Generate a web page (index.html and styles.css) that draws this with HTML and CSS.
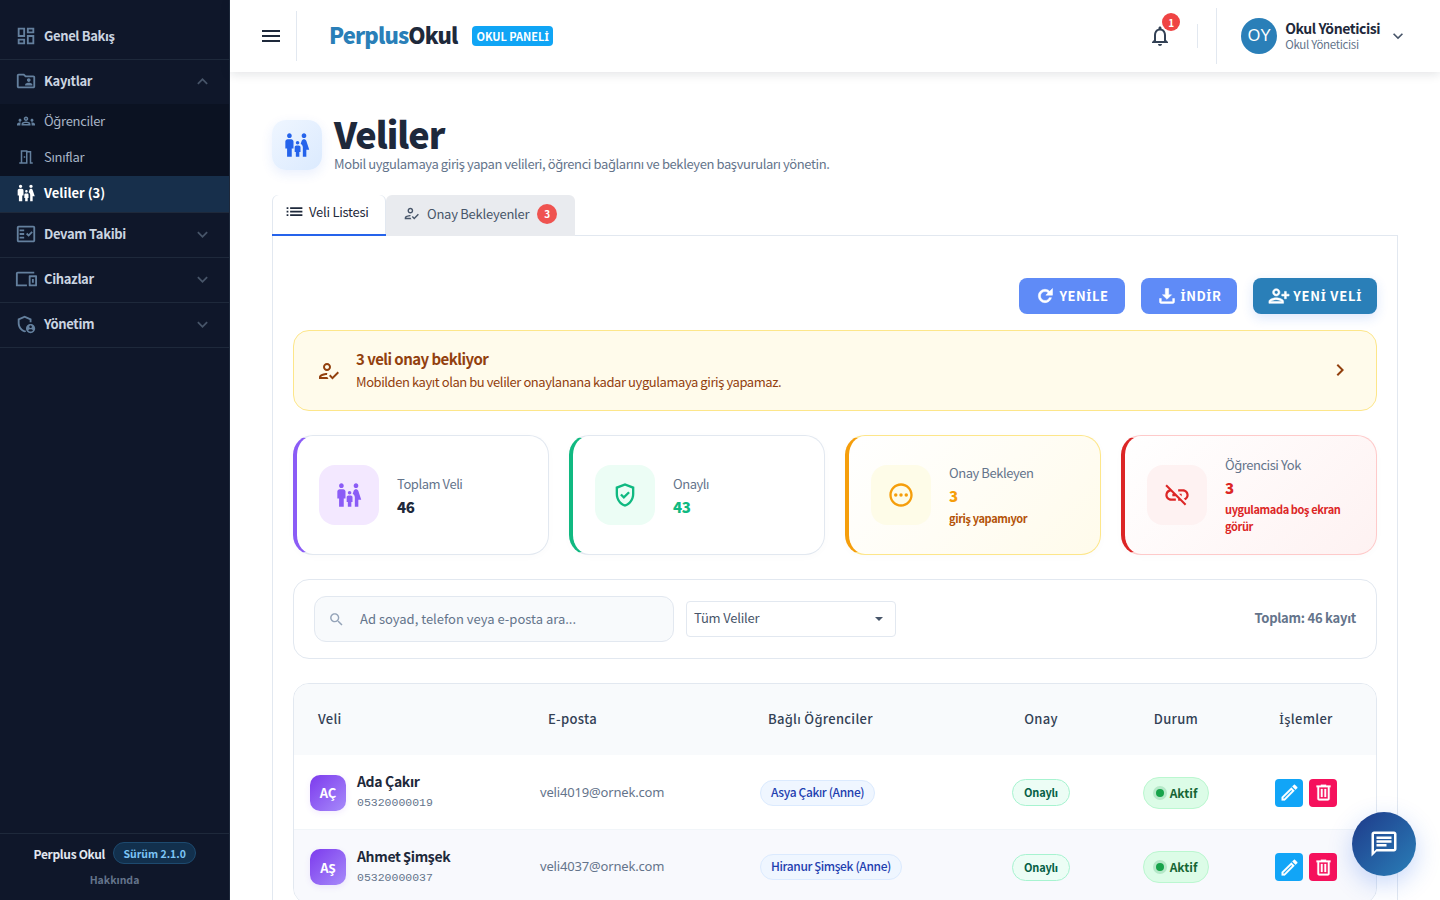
FILE: index.html
```html
<!DOCTYPE html>
<html>
<head>
    <meta charset="UTF-8">
    <meta name="viewport" content="width=device-width, initial-scale=1.0">
    <title>Veliler - Perplus Okul</title>
    <link rel="stylesheet" href="styles.css">
</head>
<body>
    <aside class="sidebar">
        <nav class="side-nav">
            <a class="nav-item first">
                <svg class="nav-icon" viewBox="0 0 24 24"><path d="M19 5v2h-4V5h4M9 5v6H5V5h4m10 8v6h-4v-6h4M9 17v2H5v-2h4M21 3h-8v6h8V3zM11 3H3v10h8V3zm10 8h-8v10h8V11zm-10 4H3v6h8v-6z"/></svg>
                <span>Genel Bakış</span>
            </a>
            <a class="nav-item open">
                <svg class="nav-icon" viewBox="0 0 24 24"><path d="M20 6h-8l-2-2H4c-1.1 0-2 .9-2 2v12c0 1.1.9 2 2 2h16c1.1 0 2-.9 2-2V8c0-1.1-.9-2-2-2zm0 12H4V6h5.17l2 2H20v10zm-5-5c1.1 0 2-.9 2-2s-.9-2-2-2-2 .9-2 2 .9 2 2 2zm-4 4h8v-1c0-1.33-2.67-2-4-2s-4 .67-4 2v1z"/></svg>
                <span>Kayıtlar</span>
                <svg class="nav-arrow" viewBox="0 0 24 24"><path d="M12 8l-6 6 1.41 1.41L12 10.83l4.59 4.58L18 14z"/></svg>
            </a>
            <div class="sub-nav">
                <a class="sub-item">
                    <svg class="nav-icon" viewBox="0 0 24 24"><path d="M4 13c1.1 0 2-.9 2-2s-.9-2-2-2-2 .9-2 2 .9 2 2 2zm1.13 1.1c-.37-.06-.74-.1-1.13-.1-.99 0-1.93.21-2.78.58C.48 14.9 0 15.62 0 16.43V18h4.5v-1.61c0-.83.23-1.61.63-2.29zM20 13c1.1 0 2-.9 2-2s-.9-2-2-2-2 .9-2 2 .9 2 2 2zm4 3.43c0-.81-.48-1.53-1.22-1.85-.85-.37-1.79-.58-2.78-.58-.39 0-.76.04-1.13.1.4.68.63 1.46.63 2.29V18H24v-1.57zm-7.76-2.78C15.07 13.13 13.63 12.75 12 12.75c-1.63 0-3.07.39-4.24.9C6.68 14.13 6 15.21 6 16.39V18h12v-1.61c0-1.18-.68-2.26-1.76-2.74zM8.07 16c.09-.23.13-.39.91-.69.97-.38 1.99-.56 3.02-.56s2.05.18 3.02.56c.77.3.81.46.91.69H8.07zM12 8c.55 0 1 .45 1 1s-.45 1-1 1-1-.45-1-1 .45-1 1-1m0-2c-1.66 0-3 1.34-3 3s1.34 3 3 3 3-1.34 3-3-1.34-3-3-3z"/></svg>
                    <span>Öğrenciler</span>
                </a>
                <a class="sub-item">
                    <svg class="nav-icon" viewBox="0 0 24 24"><path d="M14 6v15H3v-2h2V3h9v1h5v15h2v2h-4V6h-3zm-2-1H7v14h5V5zm-3 6h2v2H9v-2z"/></svg>
                    <span>Sınıflar</span>
                </a>
                <a class="sub-item active">
                    <svg class="nav-icon" viewBox="0 0 24 24"><path d="M16 4c0-1.11.89-2 2-2s2 .89 2 2-.89 2-2 2-2-.89-2-2zm4 18v-6h2.5l-2.54-7.63C19.68 7.55 18.92 7 18.06 7h-.12c-.86 0-1.63.55-1.9 1.37l-.86 2.58C16.26 11.55 17 12.68 17 14v8h3zm-7.5-10.5c.83 0 1.5-.67 1.5-1.5s-.67-1.5-1.5-1.5S11 9.17 11 10s.67 1.5 1.5 1.5zM5.5 6c1.11 0 2-.89 2-2s-.89-2-2-2-2 .89-2 2 .89 2 2 2zm2 16v-7H9V9c0-1.1-.9-2-2-2H4c-1.1 0-2 .9-2 2v6h1.5v7h4zm6.5 0v-4h1v-4c0-.82-.68-1.5-1.5-1.5h-2c-.82 0-1.5.68-1.5 1.5v4h1v4h3z"/></svg>
                    <span>Veliler (3)</span>
                </a>
            </div>
            <a class="nav-item">
                <svg class="nav-icon" viewBox="0 0 24 24"><path fill-rule="evenodd" d="M20 3H4c-1.1 0-2 .9-2 2v14c0 1.1.9 2 2 2h16c1.1 0 2-.9 2-2V5c0-1.1-.9-2-2-2zm0 16H4V5h16v14zM19.41 10.42L18 9l-3.17 3.17-1.41-1.42L12 12.17 14.83 15zM5 7h5v2H5zM5 11h5v2H5zM5 15h5v2H5z"/></svg>
                <span>Devam Takibi</span>
                <svg class="nav-arrow" viewBox="0 0 24 24"><path d="M16.59 8.59L12 13.17 7.41 8.59 6 10l6 6 6-6z"/></svg>
            </a>
            <a class="nav-item">
                <svg class="nav-icon" viewBox="0 0 24 24"><path d="M3 6h18V4H3c-1.1 0-2 .9-2 2v11H1v3h12v-2H3V6zm20 2h-7c-.55 0-1 .45-1 1v10c0 .55.45 1 1 1h7c.55 0 1-.45 1-1V9c0-.55-.45-1-1-1zm-1 10h-5v-8h5v8zm-3.5-6h2v4h-2z"/></svg>
                <span>Cihazlar</span>
                <svg class="nav-arrow" viewBox="0 0 24 24"><path d="M16.59 8.59L12 13.17 7.41 8.59 6 10l6 6 6-6z"/></svg>
            </a>
            <a class="nav-item">
                <svg class="nav-icon" viewBox="0 0 24 24"><path d="M10.5 3L3 6.27v4.91c0 4.54 3.2 8.79 7.5 9.82.55-.13 1.08-.32 1.6-.55l-.9-1.6c-.23.1-.46.18-.7.25C7.2 17.9 5 14.5 5 11.18V7.6l5.5-2.4L16 7.6v2.4h2V6.27L10.5 3zM17 12c-2.76 0-5 2.24-5 5s2.24 5 5 5 5-2.24 5-5-2.24-5-5-5zm0 1.6c.8 0 1.4.63 1.4 1.4s-.63 1.4-1.4 1.4-1.4-.63-1.4-1.4.6-1.4 1.4-1.4zm0 6.7c-1.1 0-2.1-.55-2.7-1.4.1-.85 1.8-1.3 2.7-1.3s2.6.45 2.7 1.3c-.6.85-1.6 1.4-2.7 1.4z"/></svg>
                <span>Yönetim</span>
                <svg class="nav-arrow" viewBox="0 0 24 24"><path d="M16.59 8.59L12 13.17 7.41 8.59 6 10l6 6 6-6z"/></svg>
            </a>
        </nav>
        <div class="side-footer">
            <div class="side-brand">
                <strong>Perplus Okul</strong>
                <span class="version">Sürüm 2.1.0</span>
            </div>
            <a class="about">Hakkında</a>
        </div>
    </aside>

    <div class="content">
        <header class="topbar">
            <button class="menu-btn">
                <svg viewBox="0 0 24 24"><path d="M3 18h18v-2H3v2zm0-5h18v-2H3v2zm0-7v2h18V6H3z"/></svg>
            </button>
            <div class="logo"><span class="logo-a">Perplus</span><span class="logo-b">Okul</span></div>
            <span class="panel-tag"><span>OKUL PANEL<span class="tr-i">İ</span></span></span>
            <div class="top-right">
                <div class="bell">
                    <svg viewBox="0 0 24 24"><path d="M12 22c1.1 0 2-.9 2-2h-4c0 1.1.9 2 2 2zm6-6v-5c0-3.07-1.63-5.64-4.5-6.32V4c0-.83-.67-1.5-1.5-1.5s-1.5.67-1.5 1.5v.68C7.64 5.36 6 7.92 6 11v5l-2 2v1h16v-1l-2-2zm-2 1H8v-6c0-2.48 1.51-4.5 4-4.5s4 2.02 4 4.5v6z"/></svg>
                    <span class="bell-count">1</span>
                </div>
                <div class="short-line"></div>
                <div class="user">
                    <div class="user-avatar">OY</div>
                    <div class="user-text">
                        <strong>Okul Yöneticisi</strong>
                        <span>Okul Yöneticisi</span>
                    </div>
                    <svg class="user-arrow" viewBox="0 0 24 24"><path d="M16.59 8.59L12 13.17 7.41 8.59 6 10l6 6 6-6z"/></svg>
                </div>
            </div>
        </header>

        <main class="main">
            <div class="page-head">
                <div class="page-icon">
                    <svg viewBox="0 0 24 24"><path d="M16 4c0-1.11.89-2 2-2s2 .89 2 2-.89 2-2 2-2-.89-2-2zm4 18v-6h2.5l-2.54-7.63C19.68 7.55 18.92 7 18.06 7h-.12c-.86 0-1.63.55-1.9 1.37l-.86 2.58C16.26 11.55 17 12.68 17 14v8h3zm-7.5-10.5c.83 0 1.5-.67 1.5-1.5s-.67-1.5-1.5-1.5S11 9.17 11 10s.67 1.5 1.5 1.5zM5.5 6c1.11 0 2-.89 2-2s-.89-2-2-2-2 .89-2 2 .89 2 2 2zm2 16v-7H9V9c0-1.1-.9-2-2-2H4c-1.1 0-2 .9-2 2v6h1.5v7h4zm6.5 0v-4h1v-4c0-.82-.68-1.5-1.5-1.5h-2c-.82 0-1.5.68-1.5 1.5v4h1v4h3z"/></svg>
                </div>
                <div>
                    <h1>Veliler</h1>
                    <p>Mobil uygulamaya giriş yapan velileri, öğrenci bağlarını ve bekleyen başvuruları yönetin.</p>
                </div>
            </div>

            <div class="tabs">
                <button class="tab active">
                    <svg viewBox="0 0 24 24"><path d="M3 13h2v-2H3v2zm0 4h2v-2H3v2zm0-8h2V7H3v2zm4 4h14v-2H7v2zm0 4h14v-2H7v2zM7 7v2h14V7H7z"/></svg>
                    Veli Listesi
                </button>
                <button class="tab">
                    <svg viewBox="0 0 24 24"><path d="M9 12c2.21 0 4-1.79 4-4s-1.79-4-4-4-4 1.79-4 4 1.79 4 4 4zm0-6c1.1 0 2 .9 2 2s-.9 2-2 2-2-.9-2-2 .9-2 2-2zM3 18c.22-.72 3.31-2 6-2 0-.7.13-1.37.35-1.99C6.62 13.91 1 15.27 1 18v2h9.54c-.52-.58-.93-1.25-1.19-2H3zM19.6 12.5l-5.13 5.17-2.07-2.08L11 17l3.47 3.5L21 13.91z"/></svg>
                    Onay Bekleyenler
                    <span class="tab-count">3</span>
                </button>
            </div>

            <section class="panel">
                <div class="actions">
                    <button class="btn btn-light">
                        <svg viewBox="0 0 24 24"><path d="M17.65 6.35C16.2 4.9 14.21 4 12 4c-4.42 0-7.99 3.58-7.99 8s3.57 8 7.99 8c3.73 0 6.84-2.55 7.73-6h-2.6c-.82 2.02-2.8 3.4-5.13 3.4-3.04 0-5.4-2.36-5.4-5.4s2.36-5.4 5.4-5.4c1.5 0 2.8.6 3.8 1.6L13 11h8V3l-3.35 3.35z"/></svg>
                        <span>YEN<span class="tr-i">İ</span>LE</span>
                    </button>
                    <button class="btn btn-light">
                        <svg viewBox="0 0 24 24"><path d="M12 16l5.5-5.5H14V3h-4v7.5H6.5L12 16zM3 15h2.2v3.8h13.600V15H21v4c0 1.100-.9 2-2 2H5c-1.100 0-2-.9-2-2v-4z"/></svg>
                        <span><span class="tr-i">İ</span>ND<span class="tr-i">İ</span>R</span>
                    </button>
                    <button class="btn btn-dark">
                        <svg class="flip" viewBox="0 0 24 24"><path d="M15 12c2.21 0 4-1.790 4-4s-1.790-4-4-4-4 1.790-4 4 1.790 4 4 4zm0-6c1.100 0 2 .9 2 2s-.9 2-2 2-2-.9-2-2 .9-2 2-2zm0 8c-2.670 0-8 1.340-8 4v2h16v-2c0-2.660-5.330-4-8-4zm-6 4c.22-.72 3.310-2 6-2 2.700 0 5.800 1.290 6 2H9zm-3-3v-3h3v-2H6V7H4v3H1v2h3v3z"/></svg>
                        <span>YEN<span class="tr-i">İ</span> VEL<span class="tr-i">İ</span></span>
                    </button>
                </div>

                <div class="notice">
                    <svg class="notice-icon" viewBox="0 0 24 24"><path d="M9 12c2.21 0 4-1.79 4-4s-1.79-4-4-4-4 1.79-4 4 1.79 4 4 4zm0-6c1.1 0 2 .9 2 2s-.9 2-2 2-2-.9-2-2 .9-2 2-2zM3 18c.22-.72 3.31-2 6-2 0-.7.13-1.37.35-1.99C6.62 13.91 1 15.27 1 18v2h9.54c-.52-.58-.93-1.25-1.19-2H3zM19.6 12.5l-5.13 5.17-2.07-2.08L11 17l3.47 3.5L21 13.91z"/></svg>
                    <div class="notice-text">
                        <strong>3 veli onay bekliyor</strong>
                        <span>Mobilden kayıt olan bu veliler onaylanana kadar uygulamaya giriş yapamaz.</span>
                    </div>
                    <svg class="notice-arrow" viewBox="0 0 24 24"><path d="M10 6L8.590 7.410 13.170 12l-4.580 4.590L10 18l6-6z"/></svg>
                </div>

                <div class="stats">
                    <div class="stat stat-purple">
                        <div class="stat-icon">
                            <svg viewBox="0 0 24 24"><path d="M16 4c0-1.11.89-2 2-2s2 .89 2 2-.89 2-2 2-2-.89-2-2zm4 18v-6h2.5l-2.54-7.63C19.68 7.55 18.92 7 18.06 7h-.12c-.86 0-1.63.55-1.9 1.37l-.86 2.58C16.26 11.55 17 12.68 17 14v8h3zm-7.5-10.5c.83 0 1.5-.67 1.5-1.5s-.67-1.5-1.5-1.5S11 9.17 11 10s.67 1.5 1.5 1.5zM5.5 6c1.11 0 2-.89 2-2s-.89-2-2-2-2 .89-2 2 .89 2 2 2zm2 16v-7H9V9c0-1.1-.9-2-2-2H4c-1.1 0-2 .9-2 2v6h1.5v7h4zm6.5 0v-4h1v-4c0-.82-.68-1.5-1.5-1.5h-2c-.82 0-1.5.68-1.5 1.5v4h1v4h3z"/></svg>
                        </div>
                        <div class="stat-text">
                            <span class="stat-label">Toplam Veli</span>
                            <strong class="stat-value">46</strong>
                        </div>
                    </div>
                    <div class="stat stat-green">
                        <div class="stat-icon">
                            <svg viewBox="0 0 24 24"><path d="M12 2L4 5v6.090c0 5.050 3.410 9.760 8 10.910 4.590-1.150 8-5.860 8-10.910V5l-8-3zm6 9.090c0 4-2.550 7.700-6 8.830-3.450-1.130-6-4.820-6-8.830v-4.700l6-2.250 6 2.250v4.700zM9.200 10.900l-1.400 1.400 3.200 3.200 5.200-5.200-1.400-1.400-3.800 3.800-1.800-1.800z"/></svg>
                        </div>
                        <div class="stat-text">
                            <span class="stat-label">Onaylı</span>
                            <strong class="stat-value">43</strong>
                        </div>
                    </div>
                    <div class="stat stat-amber">
                        <div class="stat-icon">
                            <svg viewBox="0 0 24 24"><path d="M12 2C6.480 2 2 6.480 2 12s4.480 10 10 10 10-4.480 10-10S17.520 2 12 2zm0 18c-4.420 0-8-3.580-8-8s3.580-8 8-8 8 3.580 8 8-3.580 8-8 8z"/><circle cx="7.500" cy="12" r="1.500"/><circle cx="12" cy="12" r="1.500"/><circle cx="16.500" cy="12" r="1.500"/></svg>
                        </div>
                        <div class="stat-text">
                            <span class="stat-label">Onay Bekleyen</span>
                            <strong class="stat-value">3</strong>
                            <small class="stat-note">giriş yapamıyor</small>
                        </div>
                    </div>
                    <div class="stat stat-red">
                        <div class="stat-icon">
                            <svg viewBox="0 0 24 24"><path d="M17 7h-4v1.900h4c1.710 0 3.100 1.390 3.100 3.100 0 1.430-.98 2.630-2.310 2.980l1.460 1.460C20.880 15.610 22 13.950 22 12c0-2.760-2.240-5-5-5zm-1 4h-2.190l2 2H16zM2 4.270l3.110 3.110C3.290 8.120 2 9.910 2 12c0 2.760 2.240 5 5 5h4v-1.900H7c-1.710 0-3.100-1.390-3.100-3.100 0-1.590 1.210-2.900 2.760-3.070L8.730 11H8v2h2.730L13 15.270V17h1.730l4.010 4L20 19.740 3.270 3 2 4.270z"/></svg>
                        </div>
                        <div class="stat-text">
                            <span class="stat-label">Öğrencisi Yok</span>
                            <strong class="stat-value">3</strong>
                            <small class="stat-note">uygulamada boş ekran görür</small>
                        </div>
                    </div>
                </div>

                <div class="filters">
                    <div class="search">
                        <svg viewBox="0 0 24 24"><path d="M15.500 14h-.79l-.28-.27C15.410 12.590 16 11.110 16 9.500 16 5.910 13.090 3 9.500 3S3 5.910 3 9.500 5.910 16 9.500 16c1.610 0 3.090-.59 4.230-1.570l.27.28v.79l5 4.990L20.490 19l-4.990-5zm-6 0C7.010 14 5 11.990 5 9.500S7.010 5 9.500 5 14 7.010 14 9.500 11.990 14 9.500 14z"/></svg>
                        <span>Ad soyad, telefon veya e-posta ara...</span>
                    </div>
                    <div class="select">
                        <span>Tüm Veliler</span>
                        <i class="caret"></i>
                    </div>
                    <strong class="total">Toplam: 46 kayıt</strong>
                </div>

                <div class="table-card">
                    <table class="table">
                        <thead>
                            <tr>
                                <th class="col-name">Veli</th>
                                <th class="col-mail">E-posta</th>
                                <th class="col-kids">Bağlı Öğrenciler</th>
                                <th class="col-ok">Onay</th>
                                <th class="col-state">Durum</th>
                                <th class="col-act"><span class="tr-i">İ</span>şlemler</th>
                            </tr>
                        </thead>
                        <tbody>
                            <tr>
                                <td>
                                    <div class="person">
                                        <div class="initials">AÇ</div>
                                        <div class="person-text">
                                            <strong>Ada Çakır</strong>
                                            <span>05320000019</span>
                                        </div>
                                    </div>
                                </td>
                                <td class="mail">veli4019@ornek.com</td>
                                <td><span class="kid">Asya Çakır (Anne)</span></td>
                                <td class="mid"><span class="ok-chip">Onaylı</span></td>
                                <td class="mid"><span class="state-chip"><i class="dot"></i>Aktif</span></td>
                                <td class="mid">
                                    <div class="row-btns">
                                        <button class="icon-btn edit"><svg viewBox="0 0 24 24"><path d="M14.060 9L15 9.940 5.920 19H5v-.92L14.060 9M17.660 3c-.25 0-.51.1-.7.29l-1.830 1.830 3.750 3.750 1.830-1.830c.39-.39.39-1.040 0-1.410l-2.340-2.340c-.2-.2-.45-.29-.71-.29M14.060 6.190L3 17.250V21h3.750L17.810 9.940l-3.750-3.750z"/></svg></button>
                                        <button class="icon-btn del"><svg viewBox="0 0 24 24"><path d="M9 3v1H4v2h1v13a2 2 0 0 0 2 2h10a2 2 0 0 0 2-2V6h1V4h-5V3H9M7 6h10v13H7V6m2 2v9h2V8H9m4 0v9h2V8h-2z"/></svg></button>
                                    </div>
                                </td>
                            </tr>
                            <tr class="alt">
                                <td>
                                    <div class="person">
                                        <div class="initials">AŞ</div>
                                        <div class="person-text">
                                            <strong>Ahmet Şimşek</strong>
                                            <span>05320000037</span>
                                        </div>
                                    </div>
                                </td>
                                <td class="mail">veli4037@ornek.com</td>
                                <td><span class="kid">Hiranur Şimşek (Anne)</span></td>
                                <td class="mid"><span class="ok-chip">Onaylı</span></td>
                                <td class="mid"><span class="state-chip"><i class="dot"></i>Aktif</span></td>
                                <td class="mid">
                                    <div class="row-btns">
                                        <button class="icon-btn edit"><svg viewBox="0 0 24 24"><path d="M14.060 9L15 9.940 5.920 19H5v-.92L14.060 9M17.660 3c-.25 0-.51.1-.7.29l-1.830 1.830 3.750 3.750 1.830-1.830c.39-.39.39-1.040 0-1.410l-2.340-2.340c-.2-.2-.45-.29-.71-.29M14.060 6.190L3 17.250V21h3.750L17.810 9.940l-3.750-3.750z"/></svg></button>
                                        <button class="icon-btn del"><svg viewBox="0 0 24 24"><path d="M9 3v1H4v2h1v13a2 2 0 0 0 2 2h10a2 2 0 0 0 2-2V6h1V4h-5V3H9M7 6h10v13H7V6m2 2v9h2V8H9m4 0v9h2V8h-2z"/></svg></button>
                                    </div>
                                </td>
                            </tr>
                        </tbody>
                    </table>
                </div>
            </section>
        </main>
    </div>

    <button class="chat-fab">
        <svg viewBox="0 0 24 24"><path d="M20 2H4c-1.100 0-2 .9-2 2v18l4-4h14c1.100 0 2-.9 2-2V4c0-1.100-.9-2-2-2zm0 14H6l-2 2V4h16v12zM6 12h8v2H6zM6 9h12v2H6zM6 6h12v2H6z"/></svg>
    </button>
</body>
</html>
```

FILE: styles.css
```css
* {
    box-sizing: border-box;
    margin: 0;
    padding: 0;
}

html,
body {
    height: 100%;
    overflow: hidden;
}

body {
    display: flex;
    font-family: "Noto Sans CJK SC", "Noto Sans", sans-serif;
    font-size: 13px;
    color: #1e293b;
    background-color: #fff;
}

svg {
    fill: currentColor;
    display: block;
    flex-shrink: 0;
}

button {
    font-family: inherit;
    border: none;
    background: none;
}

/* the CJK font has no usable dotted capital I */
.tr-i {
    font-family: "Noto Sans", sans-serif;
}

/* sidebar */

.sidebar {
    width: 230px;
    height: 100vh;
    flex-shrink: 0;
    display: flex;
    flex-direction: column;
    background-color: #0f172a;
    border-right: 1px solid #1e293b;
}

.side-nav {
    flex: 1;
    padding-top: 14px;
}

.nav-item {
    height: 45px;
    display: flex;
    align-items: center;
    gap: 7px;
    padding: 0 16px 2px 15px;
    font-size: 13px;
    font-weight: 700;
    letter-spacing: -0.35px;
    color: #cbd5e1;
    border-bottom: 1px solid #1e293b;
}

.nav-item.first {
    height: 46px;
}

.nav-item.open {
    border-bottom: none;
    height: 44px;
}

.nav-icon {
    width: 22px;
    height: 22px;
    color: #64809e;
}

.nav-item span,
.sub-item span {
    flex: 1;
    padding-bottom: 2px;
}

.nav-item.first span {
    padding-bottom: 0;
}

.nav-arrow {
    width: 21px;
    height: 21px;
    color: #475569;
}

.sub-nav {
    background-color: #0b1222;
    border-bottom: 1px solid #1e293b;
}

.sub-item {
    height: 36px;
    display: flex;
    align-items: center;
    gap: 9px;
    padding: 0 17px 2px;
    font-size: 13px;
    letter-spacing: -0.3px;
    color: #a8b5c7;
}

.sub-item .nav-icon {
    width: 18px;
    height: 18px;
}

.sub-item.active {
    background-color: #172f4b;
    color: #fff;
    font-weight: 700;
    letter-spacing: 0;
}

.sub-item.active .nav-icon {
    width: 20px;
    height: 20px;
    margin: 0 -1px;
    color: #fff;
}

.side-footer {
    height: 67px;
    border-top: 1px solid #1e293b;
    display: flex;
    flex-direction: column;
    align-items: center;
    padding-top: 8px;
    gap: 8px;
}

.side-brand {
    display: flex;
    align-items: center;
    gap: 8px;
    margin-left: 1px;
}

.side-brand strong {
    font-size: 12px;
    font-weight: 700;
    letter-spacing: -0.33px;
    color: #e2e8f0;
}

.version {
    height: 22px;
    padding: 0 9.5px;
    display: flex;
    align-items: center;
    border-radius: 11px;
    font-size: 10.5px;
    font-weight: 700;
    color: #7cc4f5;
    background-color: #12304d;
    border: 1px solid #1d4a6f;
}

.about {
    font-size: 10.5px;
    font-weight: 700;
    color: #64748b;
}

/* top bar */

.content {
    flex: 1;
    min-width: 0;
    height: 100vh;
    display: flex;
    flex-direction: column;
    background-color: #fff;
}

.topbar {
    height: 72px;
    flex-shrink: 0;
    display: flex;
    align-items: center;
    background-color: #fff;
    box-shadow: 0 2px 10px rgba(15, 23, 42, 0.12);
    position: relative;
    z-index: 2;
}

.menu-btn {
    width: 67px;
    height: 50px;
    padding-left: 29px;
    border-right: 1px solid #e2e8f0;
    color: #1e293b;
    display: flex;
    align-items: center;
}

.menu-btn svg {
    width: 24px;
    height: 24px;
}

.logo {
    margin-left: 32px;
    padding-bottom: 4px;
    font-size: 22px;
    font-weight: 900;
    letter-spacing: -0.85px;
}

.logo-a {
    color: #2a7fb8;
}

.logo-b {
    color: #1e293b;
}

.panel-tag {
    margin-left: 15px;
    height: 20px;
    padding: 0 4px 1px;
    display: flex;
    align-items: center;
    border-radius: 4px;
    font-size: 11px;
    font-weight: 700;
    color: #fff;
    background-color: #10a5f5;
}

.top-right {
    margin-left: auto;
    display: flex;
    align-items: center;
}

.bell {
    position: relative;
    width: 24px;
    height: 24px;
    color: #334155;
}

.bell svg {
    width: 24px;
    height: 24px;
}

.bell-count {
    position: absolute;
    top: -11px;
    left: 14px;
    width: 18px;
    height: 18px;
    border-radius: 50%;
    display: flex;
    align-items: center;
    justify-content: center;
    font-size: 10px;
    font-weight: 700;
    color: #fff;
    background-color: #ef4444;
}

.short-line {
    width: 1px;
    height: 24px;
    margin-left: 25px;
    background-color: #e2e8f0;
}

.user {
    height: 56px;
    margin-left: 18px;
    padding: 0 32px 0 24px;
    display: flex;
    align-items: center;
    gap: 8px;
    border-left: 1px solid #e2e8f0;
}

.user-avatar {
    width: 36px;
    height: 36px;
    border-radius: 50%;
    display: flex;
    align-items: center;
    justify-content: center;
    font-family: "Liberation Sans", sans-serif;
    font-size: 16px;
    color: #fff;
    background-color: #2a7fb8;
}

.user-text {
    display: flex;
    flex-direction: column;
    line-height: 16px;
}

.user-text strong {
    font-size: 14px;
    font-weight: 700;
    letter-spacing: -0.45px;
    color: #1e293b;
}

.user-text span {
    font-size: 11.5px;
    letter-spacing: -0.33px;
    color: #64748b;
}

.user-arrow {
    width: 20px;
    height: 20px;
    color: #475569;
}

/* page */

.main {
    flex: 1;
    overflow: hidden;
    padding: 48px 42px 0;
    background-color: #fff;
}

.page-head {
    display: flex;
    align-items: center;
    gap: 12px;
    height: 50px;
}

.page-icon {
    width: 50px;
    height: 50px;
    border-radius: 14px;
    display: flex;
    align-items: center;
    justify-content: center;
    color: #2563eb;
    background: linear-gradient(135deg, #eff6ff, #dbeafe);
    box-shadow: 0 4px 12px rgba(37, 99, 235, 0.1);
}

.page-icon svg {
    width: 28px;
    height: 28px;
}

h1 {
    font-size: 36px;
    line-height: 36px;
    font-weight: 900;
    letter-spacing: -1px;
    color: #1e293b;
    margin-top: -1px;
}

.page-head p {
    margin-top: 3px;
    font-size: 13px;
    line-height: 20px;
    letter-spacing: -0.4px;
    color: #64748b;
}

.tabs {
    display: flex;
    margin-top: 25px;
    height: 41px;
}

.tab {
    width: 189px;
    height: 41px;
    padding: 0 0 4px 18px;
    display: flex;
    align-items: center;
    gap: 6px;
    font-size: 13px;
    letter-spacing: -0.25px;
    color: #475569;
    background-color: #e9ebef;
    border-radius: 6px 6px 0 0;
}

.tab svg {
    width: 17px;
    height: 17px;
}

.tab.active {
    width: 114px;
    padding: 0 0 6px 12px;
    gap: 4px;
    color: #1e293b;
    background-color: #fff;
    border-bottom: 2px solid #2563eb;
    box-shadow: inset 1px 0 0 #e2e8f0, inset -1px 0 0 #e2e8f0;
}

.tab.active svg {
    width: 21px;
    height: 21px;
}

.tab-count {
    width: 20px;
    height: 20px;
    margin-left: 2px;
    border-radius: 50%;
    display: flex;
    align-items: center;
    justify-content: center;
    font-size: 10px;
    font-weight: 700;
    letter-spacing: 0;
    color: #fff;
    background-color: #ef5350;
}

.panel {
    border: 1px solid #e2e8f0;
    padding: 42px 20px 0;
    margin-top: -1px;
    height: 700px;
}

.actions {
    display: flex;
    justify-content: flex-end;
    gap: 16px;
}

.btn {
    height: 36px;
    padding: 0 16px;
    display: flex;
    align-items: center;
    gap: 4px;
    border-radius: 8px;
    font-size: 13px;
    font-weight: 700;
    letter-spacing: 0.55px;
    color: #fff;
}

.btn > span {
    white-space: nowrap;
    padding-bottom: 2px;
}

.btn svg {
    width: 20px;
    height: 20px;
    stroke: currentColor;
    stroke-width: 0.6;
}

.btn-light {
    background-color: #5f8bf7;
}

.btn-dark {
    padding: 0 15px;
    gap: 3px;
    letter-spacing: 0.75px;
    background-color: #2a7fb8;
    box-shadow: 0 4px 12px rgba(37, 99, 235, 0.16);
}

.btn-dark svg {
    width: 22px;
    height: 22px;
}

.flip {
    transform: scaleX(-1);
}

.notice {
    margin-top: 16px;
    height: 81px;
    padding: 0 24px;
    display: flex;
    align-items: center;
    gap: 14px;
    border: 1px solid #fde68a;
    border-radius: 16px;
    background-color: #fffbeb;
    color: #92400e;
}

.notice-icon {
    width: 24px;
    height: 24px;
}

.notice-text {
    flex: 1;
    display: flex;
    flex-direction: column;
    gap: 2px;
    margin-top: -2px;
}

.notice-text strong {
    font-size: 15px;
    line-height: 22px;
    font-weight: 700;
    letter-spacing: -0.55px;
}

.notice-text span {
    font-size: 13px;
    line-height: 20px;
    letter-spacing: -0.43px;
}

.notice-arrow {
    width: 24px;
    height: 24px;
    margin-top: -1px;
}

.stats {
    margin-top: 24px;
    display: grid;
    grid-template-columns: repeat(4, 1fr);
    gap: 20px;
}

.stat {
    height: 120px;
    padding: 0 22px;
    display: flex;
    align-items: center;
    gap: 18px;
    border: 1px solid #e2e8f0;
    border-left: 4px solid;
    border-radius: 20px;
    background-color: #fff;
    box-shadow: 0 2px 8px rgba(15, 23, 42, 0.02);
}

.stat-icon {
    width: 60px;
    height: 60px;
    flex-shrink: 0;
    border-radius: 16px;
    display: flex;
    align-items: center;
    justify-content: center;
}

.stat-icon svg {
    width: 28px;
    height: 28px;
}

.stat-text {
    display: flex;
    flex-direction: column;
    gap: 3px;
}

.stat-label {
    font-size: 13px;
    line-height: 20px;
    letter-spacing: -0.45px;
    color: #64748b;
}

.stat-value {
    font-size: 15px;
    line-height: 20px;
    font-weight: 900;
    letter-spacing: -0.5px;
}

.stat-note {
    font-size: 11px;
    line-height: 17px;
    font-weight: 700;
    letter-spacing: -0.38px;
}

.stat-purple {
    border-left-color: #8b5cf6;
}

.stat-purple .stat-icon {
    color: #8b5cf6;
    background-color: #f3e8ff;
}

.stat-purple .stat-value {
    color: #1e293b;
}

.stat-green {
    border-left-color: #10b981;
}

.stat-green .stat-icon {
    color: #10b981;
    background-color: #ecfdf5;
}

.stat-green .stat-value {
    color: #10b981;
}

.stat-amber {
    border-color: #fde68a;
    border-left-color: #f59e0b;
    background: linear-gradient(135deg, #fff, #fffbeb);
}

.stat-amber .stat-text {
    margin-top: -1px;
}

.stat-amber .stat-note {
    margin-top: 1px;
    color: #b45309;
}

.stat-amber .stat-icon {
    color: #f59e0b;
    background-color: #fefce8;
}

.stat-amber .stat-value {
    color: #f59e0b;
}

.stat-red {
    border-color: #fecaca;
    border-left-color: #dc2626;
    background: linear-gradient(135deg, #fff, #fef2f2);
}

.stat-red .stat-icon {
    color: #dc2626;
    background-color: #fef2f2;
}

.stat-red .stat-value,
.stat-red .stat-note {
    color: #dc2626;
}

.filters {
    margin-top: 24px;
    height: 80px;
    padding: 0 20px;
    display: flex;
    align-items: center;
    gap: 12px;
    border: 1px solid #e2e8f0;
    border-radius: 16px;
    background-color: #fff;
}

.search {
    width: 360px;
    height: 46px;
    padding: 0 13px;
    display: flex;
    align-items: center;
    gap: 15px;
    border: 1px solid #e2e8f0;
    border-radius: 12px;
    background-color: #f8fafc;
    font-size: 13px;
    color: #64748b;
}

.search span {
    padding-bottom: 2px;
}

.search svg {
    width: 17px;
    height: 17px;
    color: #94a3b8;
}

.select {
    width: 210px;
    height: 36px;
    padding: 0 12px 0 7px;
    display: flex;
    align-items: center;
    justify-content: space-between;
    border: 1px solid #e2e8f0;
    border-radius: 4px;
    background-color: #fff;
    font-size: 13px;
    letter-spacing: -0.2px;
    color: #475569;
}

.select span {
    padding-bottom: 3px;
}

.caret {
    width: 0;
    height: 0;
    border-left: 4.5px solid transparent;
    border-right: 4.5px solid transparent;
    border-top: 4.5px solid #475569;
}

.total {
    margin-left: auto;
    padding-bottom: 3px;
    font-size: 13px;
    font-weight: 700;
    letter-spacing: -0.25px;
    color: #64748b;
}

.table-card {
    margin-top: 24px;
    border: 1px solid #e2e8f0;
    border-radius: 16px;
    overflow: hidden;
    background-color: #fff;
}

.table {
    width: 100%;
    table-layout: fixed;
    border-collapse: collapse;
}

.table th {
    height: 71px;
    padding: 0 24px 2px;
    text-align: left;
    font-size: 13px;
    font-weight: 500;
    letter-spacing: 0.3px;
    color: #334155;
    background-color: #f8fafc;
}

.col-name {
    width: 230px;
}

.col-mail {
    width: 220px;
}

.col-kids {
    width: 222px;
}

.col-ok {
    width: 150px;
}

.col-state {
    width: 120px;
}

.col-act {
    width: 140px;
}

.table th.col-ok,
.table th.col-state,
.table th.col-act {
    text-align: center;
    padding: 0 0 2px;
}

.table td {
    height: 74px;
    padding: 2px 16px 0;
    border-top: 1px solid #f1f5f9;
}

.table tbody tr:first-child td {
    border-top: none;
}

.alt td {
    background-color: #f8f9fd;
}

.table td.mid {
    text-align: center;
    padding: 2px 0 0;
}

.table td.mail {
    padding-top: 0;
}

.person {
    display: flex;
    align-items: center;
    gap: 11px;
}

.initials {
    width: 36px;
    height: 36px;
    flex-shrink: 0;
    border-radius: 10px;
    display: flex;
    align-items: center;
    justify-content: center;
    font-size: 13px;
    font-weight: 700;
    color: #fff;
    background: linear-gradient(135deg, #7c3aed, #a78bfa);
    box-shadow: 0 2px 6px rgba(124, 58, 237, 0.1);
}

.person-text {
    display: flex;
    flex-direction: column;
    gap: 4px;
    margin-top: -3px;
}

.person-text strong {
    font-size: 14px;
    line-height: 20px;
    font-weight: 700;
    letter-spacing: -0.35px;
    color: #1e293b;
}

.person-text span {
    font-family: "Liberation Mono", monospace;
    font-size: 11.5px;
    line-height: 16px;
    color: #64748b;
}

.mail {
    font-family: "Noto Sans", sans-serif;
    font-size: 13px;
    letter-spacing: -0.17px;
    color: #64748b;
}

.kid {
    display: inline-block;
    height: 26px;
    line-height: 22px;
    padding: 0 10px;
    border: 1px solid #dbeafe;
    border-radius: 13px;
    font-size: 12px;
    font-weight: 500;
    letter-spacing: -0.37px;
    white-space: nowrap;
    color: #1e40af;
    background-color: #eff6ff;
}

.ok-chip {
    display: inline-block;
    height: 27px;
    line-height: 24px;
    padding: 0 11px;
    border: 1px solid #a7f3d0;
    border-radius: 14px;
    font-size: 11px;
    font-weight: 700;
    letter-spacing: -0.2px;
    color: #065f46;
    background-color: #ecfdf5;
}

.state-chip {
    display: inline-flex;
    align-items: center;
    gap: 3px;
    height: 32px;
    padding: 0 11px 1px 9px;
    border: 1px solid #bbf7d0;
    border-radius: 16px;
    font-size: 12px;
    font-weight: 700;
    color: #166534;
    background-color: #dcfce7;
}

.dot {
    width: 8px;
    height: 8px;
    border-radius: 50%;
    margin: 1px 3px 0;
    background-color: #16a34a;
    box-shadow: 0 0 0 3px #b5e8c8;
}

.row-btns {
    display: flex;
    justify-content: center;
    gap: 6px;
}

.icon-btn {
    width: 28px;
    height: 28px;
    border-radius: 4px;
    display: flex;
    align-items: center;
    justify-content: center;
    color: #fff;
}

.icon-btn svg {
    width: 21px;
    height: 21px;
    stroke: currentColor;
    stroke-width: 0.3;
}

.edit {
    background-color: #11a5f7;
}

.del {
    background-color: #f5115c;
}

.chat-fab {
    position: fixed;
    right: 24px;
    bottom: 24px;
    width: 64px;
    height: 64px;
    border-radius: 50%;
    display: flex;
    align-items: center;
    justify-content: center;
    color: #fff;
    background: linear-gradient(135deg, #1e3a8a, #2a7fb8);
    box-shadow: 0 8px 24px rgba(37, 99, 235, 0.25);
}

.chat-fab svg {
    width: 30px;
    height: 30px;
}
```
